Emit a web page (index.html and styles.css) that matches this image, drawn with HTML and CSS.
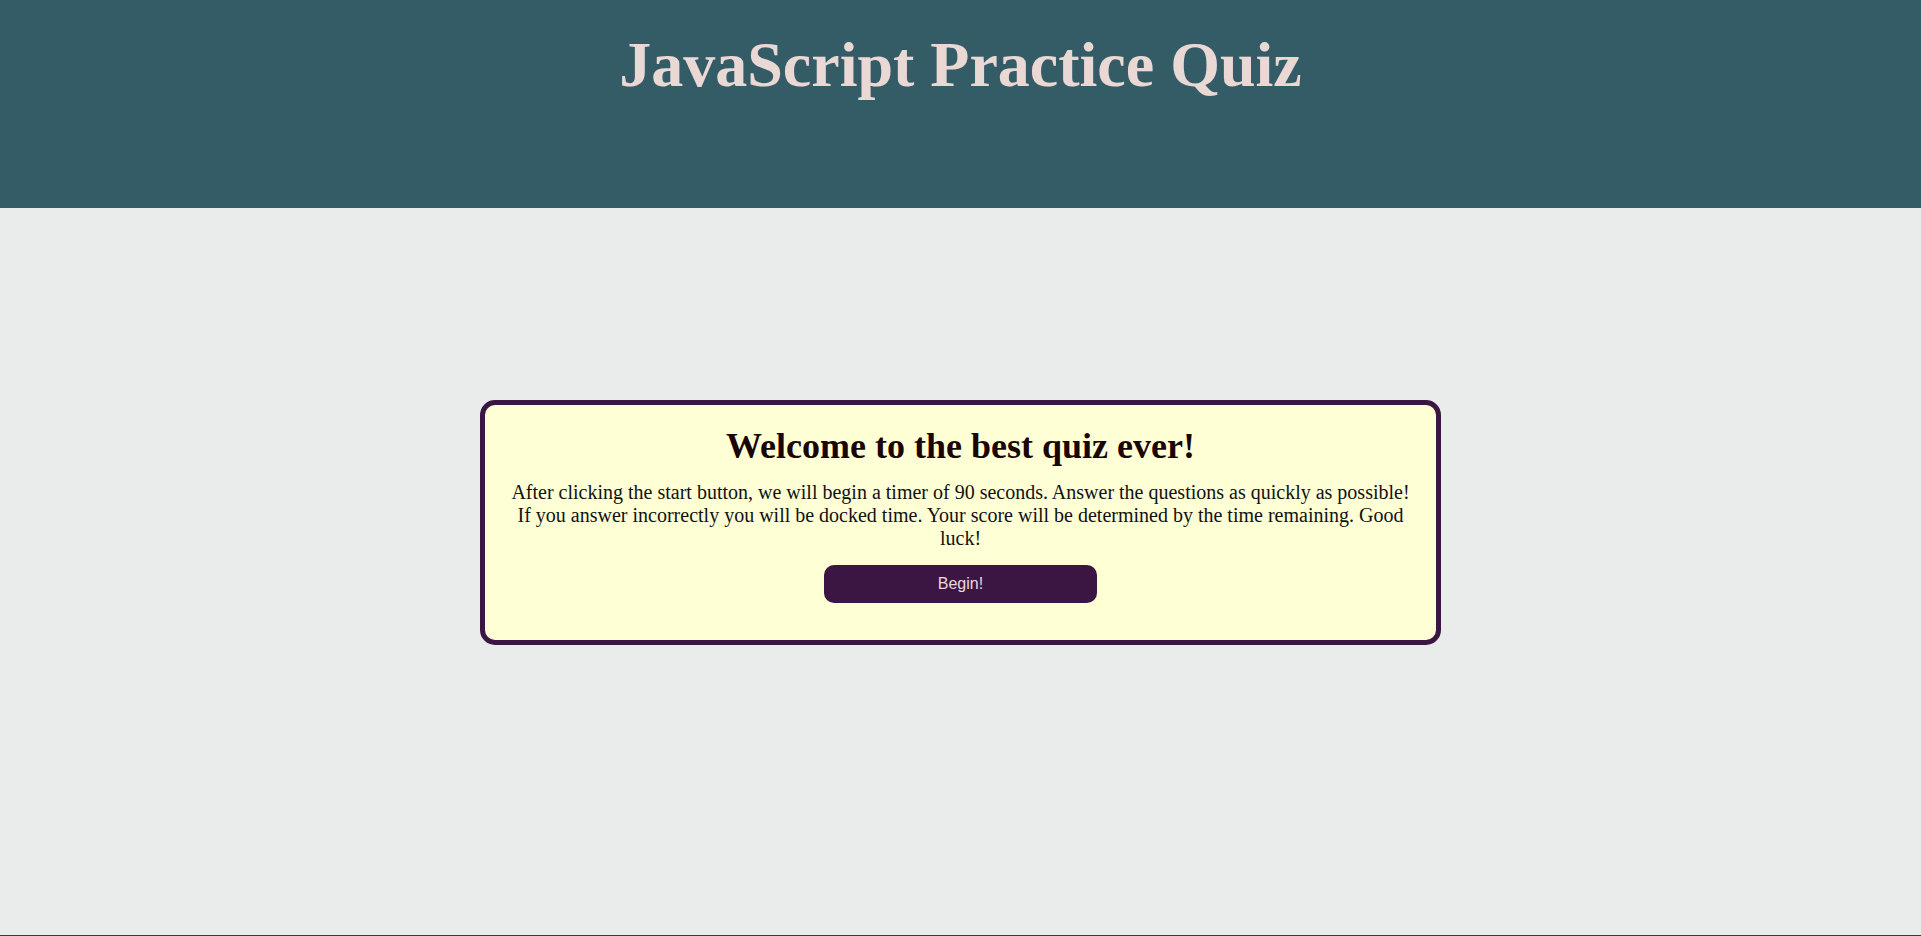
FILE: index.html
```html
<!DOCTYPE html>
<html lang="en">
<head>
<meta charset="utf-8">
<title>JavaScript Practice Quiz</title>
<link rel="stylesheet" href="styles.css">
</head>
<body>
  <header class="site-header">
    <h1 class="site-title">JavaScript Practice Quiz</h1>
  </header>
  <main class="main">
    <section class="card">
      <h2 class="card-title">Welcome to the best quiz ever!</h2>
      <p class="card-text">After clicking the start button, we will begin a timer of 90 seconds. Answer the questions as quickly as possible! If you answer incorrectly you will be docked time. Your score will be determined by the time remaining. Good luck!</p>
      <button class="begin-btn" type="button">Begin!</button>
    </section>
  </main>
</body>
</html>
```

FILE: styles.css
```css
html, body {
  margin: 0;
  padding: 0;
}

body {
  font-family: "Liberation Serif", "Times New Roman", serif;
  background: #eaeceb;
  height: 936px;
  overflow: hidden;
  display: flex;
  flex-direction: column;
}

.site-header {
  background: #345c67;
  height: 208px;
  box-sizing: border-box;
  padding-top: 28px;
  text-align: center;
}

.site-title {
  margin: 0;
  font-size: 64px;
  font-weight: bold;
  color: #ead8d4;
}

.main {
  flex: 1;
  border-bottom: 1px solid #3a3a3a;
  display: flex;
  flex-direction: column;
  align-items: center;
  padding-top: 192px;
}

.card {
  width: 50%;
  box-sizing: border-box;
  background: #ffffd6;
  border: 5px solid #3c1642;
  border-radius: 15px;
  padding: 20px 20px 37px;
  text-align: center;
}

.card-title {
  margin: 0 0 14px;
  font-size: 36px;
  font-weight: bold;
  color: #1a0505;
}

.card-text {
  margin: 0 0 15px;
  font-size: 20px;
  color: #111;
}

.begin-btn {
  width: 30%;
  height: 38px;
  background: #3c1642;
  color: #ecd8dc;
  border: none;
  border-radius: 10px;
  font-family: "Liberation Sans", Arial, sans-serif;
  font-size: 16px;
  display: block;
  margin: 0 auto;
}
```
